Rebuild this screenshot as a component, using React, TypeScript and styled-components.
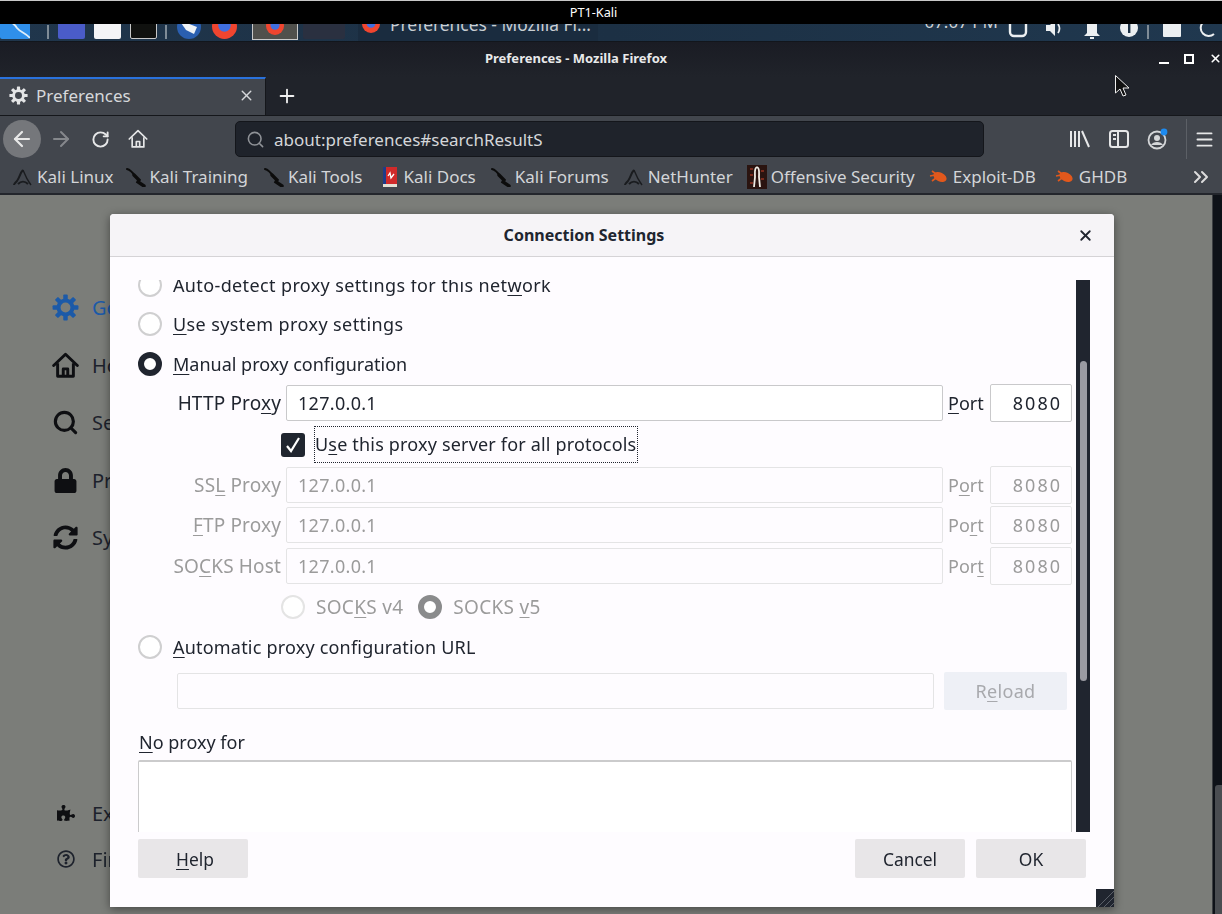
import styled, { createGlobalStyle } from 'styled-components';
import { ArrowLeft, ArrowRight, ChevronsRight, Menu, Plus, RotateCw, Search, X } from 'lucide-react';
import { FaLock, FaPuzzlePiece, FaRegQuestionCircle, FaSyncAlt } from 'react-icons/fa';

const GlobalStyle = createGlobalStyle`
  html, body {
    margin: 0;
    padding: 0;
    background: #000;
  }
  * {
    box-sizing: border-box;
  }
`;

const Screen = styled.div`
  position: relative;
  width: 1222px;
  height: 914px;
  overflow: hidden;
  display: flex;
  flex-direction: column;
  font-family: 'Noto Sans', sans-serif;
  filter: blur(0.35px);
`;

const HostBar = styled.div`
  height: 24px;
  flex: none;
  background: #000;
  border-top: 1px solid #c8c8c8;
  color: #fff;
  font-size: 12.7px;
  line-height: 23px;
  text-align: center;
  padding-right: 35px;
`;

const Panel = styled.div`
  height: 18px;
  flex: none;
  display: flex;
  align-items: flex-end;
  overflow: hidden;
  background: linear-gradient(90deg, #20364c, #1c3044 50%, #20384f);
  border-bottom: 1px solid #12161c;
  padding: 0 3px 2px 0;
`;

const PanelIcon = styled.div<{ $w: number; $h?: number; $bg?: string; $ml: number; $border?: string }>`
  flex: none;
  width: ${p => p.$w}px;
  height: ${p => p.$h ?? 22}px;
  margin-left: ${p => p.$ml}px;
  background: ${p => p.$bg ?? 'transparent'};
  border: ${p => p.$border ?? 'none'};
  border-radius: 2px;
`;

const PanelGlyph = styled.div<{ $ml: number }>`
  flex: none;
  display: flex;
  margin-left: ${p => p.$ml}px;
`;

const PanelSep = styled.div<{ $ml: number }>`
  flex: none;
  width: 2px;
  height: 14px;
  margin-left: ${p => p.$ml}px;
  background: #7f8c97;
`;

const ActiveLauncher = styled.div`
  flex: none;
  width: 46px;
  height: 30px;
  margin-left: 15px;
  margin-bottom: -1px;
  background: #50504c;
  border: 1px solid #c9c9c9;
  display: flex;
  align-items: flex-end;
  justify-content: center;
  padding-bottom: 4px;
`;

const TaskButton = styled.div`
  flex: none;
  width: 240px;
  height: 30px;
  margin-left: 13px;
  margin-bottom: -2px;
  padding: 0 6px 4px 4px;
  background: #1a2c3f;
  display: flex;
  align-items: center;
  gap: 10px;
  color: #c9ced2;
  font-size: 17.4px;
  white-space: nowrap;
`;

const Clock = styled.div`
  flex: none;
  margin-left: auto;
  margin-bottom: 5px;
  color: #cfd3d6;
  font-size: 17px;
  line-height: 24px;
`;

const TitleBar = styled.div`
  height: 35px;
  flex: none;
  display: flex;
  align-items: center;
  background: linear-gradient(180deg, #1a1c24, #20232a);
`;

const WindowTitle = styled.div`
  flex: 1;
  padding-bottom: 3px;
  text-align: center;
  color: #e8e9ea;
  font-size: 13px;
  font-weight: 700;
`;

const WindowControls = styled.div`
  width: 70px;
  display: flex;
  align-items: center;
  justify-content: space-between;
  padding: 0 0 2px 7px;
  color: #fff;
`;

const TabStrip = styled.div`
  height: 38px;
  flex: none;
  display: flex;
  align-items: stretch;
  background: #20232a;
`;

const Tab = styled.div`
  width: 266px;
  display: flex;
  align-items: center;
  gap: 8px;
  padding: 0 10px 3px 9px;
  background: #42464d;
  border-top: 2px solid #2a72dc;
  border-right: 1px solid #15171b;
  color: #d6d8db;
  font-size: 17px;
`;

const TabLabel = styled.span`
  flex: 1;
`;

const NewTab = styled.div`
  width: 42px;
  display: flex;
  align-items: center;
  justify-content: center;
  color: #f0f0f0;
`;

const NavBar = styled.div`
  height: 47px;
  flex: none;
  display: flex;
  align-items: center;
  background: #42464d;
  border-top: 1px solid #15171b;
`;

const BackButton = styled.div`
  width: 38px;
  height: 38px;
  margin-left: 3px;
  border-radius: 50%;
  background: #75777b;
  color: #e8e8e8;
  display: flex;
  align-items: center;
  justify-content: center;
`;

const NavIcon = styled.div<{ $w: number; $dim?: boolean }>`
  flex: none;
  width: ${p => p.$w}px;
  display: flex;
  align-items: center;
  justify-content: center;
  color: ${p => (p.$dim ? '#85888c' : '#e6e7e8')};
`;

const UrlBar = styled.div`
  width: 749px;
  height: 36px;
  margin: 0 76px 0 78px;
  padding-left: 10px;
  display: flex;
  align-items: center;
  gap: 9px;
  background: #1f232b;
  border: 1px solid #14161b;
  border-radius: 5px;
  color: #d4d6d9;
  font-size: 17px;
`;

const NavDivider = styled.div`
  width: 1px;
  height: 40px;
  margin: 0 5px 0 9px;
  background: #5c6066;
`;

const BookmarksBar = styled.div`
  height: 33px;
  flex: none;
  display: flex;
  align-items: center;
  gap: 14px;
  padding: 0 0 2px 13px;
  background: #42464d;
  border-bottom: 2px solid #23262c;
  color: #d3d5d8;
  font-size: 17px;
  white-space: nowrap;
`;

const Bookmark = styled.div<{ $nudge: number }>`
  flex: none;
  margin-left: ${p => p.$nudge}px;
  display: flex;
  align-items: center;
  gap: 4px;
`;

const MoreBookmarks = styled.div`
  margin-left: auto;
  margin-right: 9px;
  display: flex;
  color: #dcdcdc;
`;

const Body = styled.div`
  flex: 1;
  display: flex;
  min-height: 0;
`;

const PrefsPane = styled.div`
  flex: 1;
  display: flex;
  flex-direction: column;
  padding: 84px 0 32px 52px;
  background: #7b7d79;
`;

const PrefsItem = styled.div<{ $h: number; $active?: boolean }>`
  height: ${p => p.$h}px;
  display: flex;
  align-items: center;
  gap: 13px;
  color: ${p => (p.$active ? '#1c5aa8' : '#1d222c')};
  font-size: 20px;
`;

const PrefsIcon = styled.div`
  width: 27px;
  display: flex;
  justify-content: center;
`;

const PrefsFooter = styled.div`
  margin-top: auto;
`;

const OuterScroll = styled.div`
  flex: none;
  width: 10px;
  padding-top: 590px;
  background: #0e1218;
  border-left: 1px solid #3c3f42;
`;

const OuterThumb = styled.div`
  height: 100%;
  margin-left: 2px;
  border-radius: 3px 0 0 0;
  background: #4a4d51;
`;

const Dialog = styled.div`
  position: absolute;
  left: 110px;
  top: 214px;
  width: 1004px;
  height: 693px;
  display: flex;
  flex-direction: column;
  background: #fefcff;
  border-radius: 4px 4px 0 0;
  box-shadow: 0 2px 10px rgba(0, 0, 0, 0.45);
  color: #20252f;
  font-size: 18px;
`;

const DialogHeader = styled.div`
  height: 43px;
  flex: none;
  display: flex;
  align-items: center;
  justify-content: space-between;
  padding-right: 20px;
  background: #f6f4f7;
  border-bottom: 1px solid #d5d3d6;
  border-radius: 4px 4px 0 0;
  color: #20252f;
`;

const DialogTitle = styled.div`
  width: 948px;
  text-align: center;
  font-size: 16px;
  font-weight: 700;
`;

const ScrollArea = styled.div`
  height: 552px;
  flex: none;
  margin-top: 23px;
  display: flex;
  overflow: hidden;
  padding: 0 24px 0 28px;
`;

const ScrollContent = styled.div`
  flex: 1;
  min-width: 0;
  margin-top: -15px;
  margin-right: 4px;
`;

const Track = styled.div`
  flex: none;
  width: 14px;
  padding: 81px 3px 0 4px;
  background: #20252f;
`;

const Thumb = styled.div`
  height: 320px;
  border-radius: 4px;
  background: #9a9ba2;
`;

const RadioRow = styled.div<{ $h?: number; $mt?: number; $indent?: number; $disabled?: boolean }>`
  height: ${p => p.$h ?? 40}px;
  margin-top: ${p => p.$mt ?? 0}px;
  padding-left: ${p => p.$indent ?? 0}px;
  display: flex;
  align-items: center;
  white-space: nowrap;
  color: ${p => (p.$disabled ? '#9b9b9b' : 'inherit')};
`;

const RadioText = styled.span<{ $ls?: number }>`
  letter-spacing: ${p => p.$ls ?? 0}px;
`;

const SocksText = styled.span`
  font-size: 19px;
  letter-spacing: 0.3px;
`;

const Radio = styled.span<{ $checked?: boolean; $disabled?: boolean }>`
  flex: none;
  width: 24px;
  height: 24px;
  margin-right: 11px;
  border-radius: 50%;
  background: #fff;
  border: ${p => {
    if (p.$checked) return `6px solid ${p.$disabled ? '#8a8b8c' : '#20252f'}`;
    return `2px solid ${p.$disabled ? '#e4e4e4' : '#cfcfd0'}`;
  }};
`;

const SecondRadio = styled(Radio)`
  margin-left: 15px;
`;

const Key = styled.span`
  text-decoration: underline;
  text-underline-offset: 3px;
  text-decoration-thickness: 1px;
`;

const ProxyRow = styled.div<{ $mt: number; $disabled?: boolean }>`
  height: 38px;
  margin-top: ${p => p.$mt}px;
  display: flex;
  align-items: center;
  color: ${p => (p.$disabled ? '#9b9b9b' : 'inherit')};
`;

const FieldLabel = styled.label`
  flex: none;
  width: 143px;
  text-align: right;
  white-space: nowrap;
  font-size: 19px;
  letter-spacing: 0.15px;
`;

const PortLabel = styled.label`
  flex: none;
  width: 37px;
  margin: 0 5px;
`;

const TextField = styled.input`
  flex: 1;
  min-width: 0;
  height: 36px;
  margin-left: 5px;
  padding: 0 11px;
  background: #fff;
  border: 1px solid #c9c9cb;
  border-radius: 2px;
  outline: none;
  color: #20252f;
  font: inherit;
  letter-spacing: 0.3px;

  &:disabled {
    background: #fefcff;
    border-color: #e4e4e5;
    color: #9b9b9b;
  }
`;

const PortField = styled(TextField)`
  flex: none;
  width: 82px;
  height: 38px;
  margin-left: 0;
  padding-right: 9px;
  text-align: right;
  letter-spacing: 2px;
`;

const CheckRow = styled.div`
  height: 37px;
  margin-top: 4px;
  padding-left: 143px;
  display: flex;
  align-items: center;
`;

const CheckBox = styled.span`
  flex: none;
  width: 24px;
  height: 24px;
  margin-right: 9px;
  display: flex;
  align-items: center;
  justify-content: center;
  border-radius: 3px;
  background: #20252f;
  color: #fff;
`;

const FocusLabel = styled.span`
  height: 37px;
  padding: 0 1px 0 0;
  line-height: 35px;
  border: 1px dotted #20252f;
  white-space: nowrap;
  letter-spacing: 0.18px;
`;

const UrlRow = styled.div`
  margin-top: 5px;
  margin-right: 5px;
  padding-left: 39px;
  display: flex;
  align-items: center;
  height: 38px;
`;

const UrlField = styled(TextField)`
  margin-left: 0;
`;

const ReloadButton = styled.button`
  flex: none;
  width: 123px;
  height: 38px;
  margin-left: 10px;
  border: none;
  border-radius: 2px;
  background: #eef0f6;
  color: #a8a9ad;
  font: inherit;
  letter-spacing: 0.3px;
`;

const NoProxyLabel = styled.div`
  margin-top: 19px;
  padding-left: 1px;
  line-height: 26px;
`;

const NoProxyBox = styled.div`
  height: 120px;
  margin-top: 5px;
  background: #fff;
  border: 1px solid #cbcbcc;
  border-top-width: 2px;
  border-radius: 2px;
`;

const DialogFooter = styled.div`
  flex: 1;
  display: flex;
  align-items: flex-start;
  gap: 11px;
  padding: 7px 28px 0;
`;

const FooterButton = styled.button`
  width: 110px;
  height: 39px;
  border: none;
  border-radius: 2px;
  background: #e8e6e8;
  color: #20252f;
  font-family: inherit;
  font-size: 17.4px;
`;

const HelpButton = styled(FooterButton)`
  margin-right: auto;
  padding-left: 10px;
`;

const Resizer = styled.div`
  position: absolute;
  right: 0;
  bottom: 0;
  display: flex;
`;

const Pointer = styled.div`
  position: absolute;
  left: 1114px;
  top: 74px;
  display: flex;
`;

const Gear = ({ size, color }: { size: number; color: string }) => (
  <svg width={size} height={size} viewBox="0 0 24 24">
    <circle cx="12" cy="12" r="6.2" fill="none" stroke={color} strokeWidth="3.6" />
    {[0, 45, 90, 135, 180, 225, 270, 315].map(a => (
      <rect key={a} x="10" y="0.5" width="4" height="5" rx="0.8" fill={color} transform={`rotate(${a} 12 12)`} />
    ))}
  </svg>
);

const FirefoxMark = ({ size }: { size: number }) => (
  <svg width={size} height={size} viewBox="0 0 24 24">
    <circle cx="12" cy="12" r="12" fill="#f0452f" />
    <path d="M2 6 A12 12 0 0 1 22 6 L12 12 Z" fill="#ff9a24" />
    <circle cx="12" cy="11" r="6" fill="#3f6fe0" />
  </svg>
);

const KaliMark = () => (
  <svg width="30" height="22" viewBox="0 0 30 22">
    <rect width="30" height="22" rx="2" fill="#2f8fea" />
    <path d="M0 6 C8 2 14 6 17 11 C20 15 26 16 30 21" fill="none" stroke="#dfeefa" strokeWidth="1.8" />
  </svg>
);

const MailMark = () => (
  <svg width="24" height="24" viewBox="0 0 24 24">
    <circle cx="12" cy="12" r="12" fill="#2a5fb0" />
    <path d="M2 5 L20 12 L17 19 L9 15 Z" fill="#eef2f6" />
  </svg>
);

const TrayIcon = ({ kind }: { kind: 'net' | 'sound' | 'bell' | 'info' | 'box' | 'power' }) => (
  <svg width="20" height="22" viewBox="0 0 20 22" fill="none" stroke="#eceff1" strokeWidth="2.4">
    {kind === 'net' && <rect x="2" y="2" width="16" height="17" rx="4" />}
    {kind === 'sound' && (
      <>
        <path d="M2 8 H6 L11 3 V19 L6 14 H2 Z" fill="#eceff1" stroke="none" />
        <path d="M14 7 C16 10 16 13 14 16" strokeWidth="1.8" />
      </>
    )}
    {kind === 'bell' && (
      <>
        <path d="M5 16 V7 H15 V16 L18 19 H2 Z" fill="#eceff1" stroke="none" />
        <rect x="8" y="20" width="4" height="2" fill="#eceff1" stroke="none" />
      </>
    )}
    {kind === 'info' && (
      <>
        <circle cx="10" cy="11" r="9" fill="#eceff1" stroke="none" />
        <rect x="9" y="6" width="2.4" height="10" fill="#1c3044" stroke="none" />
      </>
    )}
    {kind === 'box' && <rect x="1" y="2" width="18" height="18" rx="1" fill="#eceff1" stroke="none" />}
    {kind === 'power' && <path d="M15 17 A8 8 0 1 1 15 5" strokeWidth="2" />}
  </svg>
);

const HomeIcon = ({ size, color, sw }: { size: number; color: string; sw: number }) => (
  <svg width={size} height={size} viewBox="0 0 24 24" fill="none" stroke={color} strokeWidth={sw} strokeLinejoin="round">
    <path d="M1.5 12 L12 2 L22.5 12" strokeLinecap="round" />
    <path d="M5 10 V21.5 H19 V10" />
    <path d="M10 21.5 V15 H14 V21.5" />
  </svg>
);

const Dragon = () => (
  <svg width="20" height="20" viewBox="0 0 20 20" fill="none" stroke="#0c0c0c" strokeLinecap="round">
    <path d="M1 2 C5 3 7 6 9 9" strokeWidth="2" />
    <path d="M8 8 L13 13 L12 15 L18 19" strokeWidth="3.4" />
  </svg>
);

const Hood = () => (
  <svg width="20" height="20" viewBox="0 0 20 20" fill="none" stroke="#1a1c1f">
    <path d="M10 3 C7 6 7 10 4 14 C2 16 1 17 1 18" strokeWidth="2" />
    <path d="M10 3 C12 7 13 11 16 15 L18 18" strokeWidth="1.4" />
    <path d="M5 17 C8 14 12 14 15 17" strokeWidth="2" />
  </svg>
);

const DocsBook = () => (
  <svg width="20" height="22" viewBox="0 0 20 22">
    <rect x="3" y="1" width="14" height="17" fill="#d02a2a" />
    <rect x="3" y="1" width="3" height="17" fill="#1f3c88" />
    <rect x="3" y="18" width="14" height="3" fill="#e4e0d4" />
    <path d="M8 10 L10 7 L11 12 L14 8" stroke="#fff" strokeWidth="1.3" fill="none" />
  </svg>
);

const OffsecMark = () => (
  <svg width="20" height="24" viewBox="0 0 20 24">
    <rect width="20" height="24" fill="#2a1410" />
    <path d="M3 4 H6 M3 10 H6 M14 6 H17 M14 14 H17 M3 18 H6" stroke="#7a2a1c" strokeWidth="2" />
    <path d="M10 2 C7 3 8 8 8 12 L7 22 M10 2 C13 3 12 8 12 12 L13 22" stroke="#f0ece4" strokeWidth="1.8" fill="none" />
  </svg>
);

const Bug = () => (
  <svg width="20" height="16" viewBox="0 0 20 16">
    <ellipse cx="11" cy="8" rx="7" ry="4.5" fill="#e2581c" transform="rotate(25 11 8)" />
    <path d="M1 7 L6 6 M3 2 L7 5 M3 12 L7 9" stroke="#e2581c" strokeWidth="1.6" />
  </svg>
);

const bookmarks = [
  { label: 'Kali Linux', icon: <Hood />, nudge: 0 },
  { label: 'Kali Training', icon: <Dragon />, nudge: -2 },
  { label: 'Kali Tools', icon: <Dragon />, nudge: 2 },
  { label: 'Kali Docs', icon: <DocsBook />, nudge: 3 },
  { label: 'Kali Forums', icon: <Dragon />, nudge: 1 },
  { label: 'NetHunter', icon: <Hood />, nudge: 1 },
  { label: 'Offensive Security', icon: <OffsecMark />, nudge: 0 },
  { label: 'Exploit-DB', icon: <Bug />, nudge: 0 },
  { label: 'GHDB', icon: <Bug />, nudge: 5 },
];

const App = () => {
  return (
    <>
      <GlobalStyle />
      <Screen>
        <HostBar>PT1-Kali</HostBar>
        <Panel>
          <KaliMark />
          <PanelSep $ml={17} />
          <PanelIcon $w={27} $bg="#4a5cc9" $ml={9} />
          <PanelIcon $w={27} $bg="#f4f4f6" $ml={9} />
          <PanelIcon $w={27} $bg="#10110f" $border="1px solid #c8c8c8" $ml={9} />
          <PanelSep $ml={8} />
          <PanelGlyph $ml={10}>
            <MailMark />
          </PanelGlyph>
          <PanelGlyph $ml={11}>
            <FirefoxMark size={25} />
          </PanelGlyph>
          <ActiveLauncher>
            <FirefoxMark size={18} />
          </ActiveLauncher>
          <PanelIcon $w={42} $bg="#2a3040" $ml={5} />
          <TaskButton>
            <FirefoxMark size={18} />
            Preferences - Mozilla Fi...
          </TaskButton>
          <Clock>07:07 PM</Clock>
          <PanelGlyph $ml={10}><TrayIcon kind="net" /></PanelGlyph>
          <PanelGlyph $ml={16}><TrayIcon kind="sound" /></PanelGlyph>
          <PanelGlyph $ml={18}><TrayIcon kind="bell" /></PanelGlyph>
          <PanelGlyph $ml={17}><TrayIcon kind="info" /></PanelGlyph>
          <PanelSep $ml={8} />
          <PanelGlyph $ml={13}><TrayIcon kind="box" /></PanelGlyph>
          <PanelGlyph $ml={17}><TrayIcon kind="power" /></PanelGlyph>
        </Panel>
        <TitleBar>
          <WindowTitle>Preferences - Mozilla Firefox</WindowTitle>
          <WindowControls>
            <svg width="10" height="10" viewBox="0 0 10 10"><rect y="8" width="10" height="2" fill="#fff" /></svg>
            <svg width="10" height="10" viewBox="0 0 10 10"><rect x="1" y="1" width="8" height="8" fill="none" stroke="#fff" strokeWidth="2" /></svg>
            <X size={13} strokeWidth={3} />
          </WindowControls>
        </TitleBar>
        <TabStrip>
          <Tab>
            <Gear size={19} color="#e4e5e6" />
            <TabLabel>Preferences</TabLabel>
            <X size={17} strokeWidth={2} />
          </Tab>
          <NewTab>
            <Plus size={22} strokeWidth={2} />
          </NewTab>
        </TabStrip>
        <NavBar>
          <BackButton>
            <ArrowLeft size={24} strokeWidth={2.2} />
          </BackButton>
          <NavIcon $w={40} $dim>
            <ArrowRight size={24} strokeWidth={2} />
          </NavIcon>
          <NavIcon $w={38}>
            <RotateCw size={19} strokeWidth={2.4} />
          </NavIcon>
          <NavIcon $w={38}>
            <HomeIcon size={20} color="#e6e7e8" sw={2} />
          </NavIcon>
          <UrlBar>
            <Search size={19} strokeWidth={2} color="#8f9297" />
            about:preferences#searchResultS
          </UrlBar>
          <NavIcon $w={39}>
            <svg width="22" height="20" viewBox="0 0 22 20" fill="none" stroke="#e6e7e8" strokeWidth="2">
              <path d="M2 2 V18 M6 2 V18 M10 2 V18 M13 2 L20 18" />
            </svg>
          </NavIcon>
          <NavIcon $w={39}>
            <svg width="20" height="20" viewBox="0 0 20 20" fill="none" stroke="#e6e7e8" strokeWidth="2">
              <rect x="1" y="2" width="18" height="16" rx="2.5" />
              <path d="M9 2 V18 M4 6 H7 M4 10 H7" />
            </svg>
          </NavIcon>
          <NavIcon $w={39}>
            <svg width="22" height="22" viewBox="0 0 22 22">
              <circle cx="10" cy="12" r="8.5" fill="none" stroke="#d4d6d8" strokeWidth="1.8" />
              <circle cx="10" cy="10" r="3" fill="#d4d6d8" />
              <path d="M4 17 C6 13 14 13 16 17" fill="#d4d6d8" />
              <circle cx="17" cy="4" r="3.4" fill="#1d8bf0" />
            </svg>
          </NavIcon>
          <NavDivider />
          <NavIcon $w={24}>
            <Menu size={21} strokeWidth={2.2} />
          </NavIcon>
        </NavBar>
        <BookmarksBar>
          {bookmarks.map(b => (
            <Bookmark key={b.label} $nudge={b.nudge}>
              {b.icon}
              {b.label}
            </Bookmark>
          ))}
          <MoreBookmarks>
            <ChevronsRight size={24} strokeWidth={2} />
          </MoreBookmarks>
        </BookmarksBar>
        <Body>
          <PrefsPane>
            <PrefsItem $h={57.5} $active>
              <PrefsIcon>
                <Gear size={27} color="#1c5aa8" />
              </PrefsIcon>
              General
            </PrefsItem>
            <PrefsItem $h={57.5}>
              <PrefsIcon>
                <HomeIcon size={29} color="#0e0f12" sw={2.6} />
              </PrefsIcon>
              Home
            </PrefsItem>
            <PrefsItem $h={57.5}>
              <PrefsIcon>
                <Search size={31} strokeWidth={2.8} color="#0e0f12" />
              </PrefsIcon>
              Search
            </PrefsItem>
            <PrefsItem $h={57.5}>
              <PrefsIcon>
                <FaLock size={25} color="#0e0f12" />
              </PrefsIcon>
              Privacy
            </PrefsItem>
            <PrefsItem $h={57.5}>
              <PrefsIcon>
                <FaSyncAlt size={25} color="#0e0f12" />
              </PrefsIcon>
              Sync
            </PrefsItem>
            <PrefsFooter>
              <PrefsItem $h={46}>
                <PrefsIcon>
                  <FaPuzzlePiece size={18} color="#0e0f12" />
                </PrefsIcon>
                Extensions
              </PrefsItem>
              <PrefsItem $h={46}>
                <PrefsIcon>
                  <FaRegQuestionCircle size={18} color="#1d222c" />
                </PrefsIcon>
                Firefox Support
              </PrefsItem>
            </PrefsFooter>
          </PrefsPane>
          <OuterScroll>
            <OuterThumb />
          </OuterScroll>
        </Body>

        <Dialog>
          <DialogHeader>
            <DialogTitle>Connection Settings</DialogTitle>
            <X size={17} strokeWidth={2.6} />
          </DialogHeader>
          <ScrollArea>
            <ScrollContent>
              <RadioRow $h={39}>
                <Radio />
                <RadioText $ls={0.37}>Auto-detect proxy settings for this net<Key>w</Key>ork</RadioText>
              </RadioRow>
              <RadioRow>
                <Radio />
                <RadioText $ls={0.4}><Key>U</Key>se system proxy settings</RadioText>
              </RadioRow>
              <RadioRow>
                <Radio $checked />
                <RadioText><Key>M</Key>anual proxy configuration</RadioText>
              </RadioRow>
              <ProxyRow $mt={0}>
                <FieldLabel>HTTP Pro<Key>x</Key>y</FieldLabel>
                <TextField readOnly value="127.0.0.1" />
                <PortLabel><Key>P</Key>ort</PortLabel>
                <PortField readOnly value="8080" />
              </ProxyRow>
              <CheckRow>
                <CheckBox>
                  <svg width="18" height="18" viewBox="0 0 18 18" fill="none" stroke="#fff" strokeWidth="2.2">
                    <path d="M3 10 L7 15 L15 2" />
                  </svg>
                </CheckBox>
                <FocusLabel>U<Key>s</Key>e this proxy server for all protocols</FocusLabel>
              </CheckRow>
              <ProxyRow $mt={3} $disabled>
                <FieldLabel>SS<Key>L</Key> Proxy</FieldLabel>
                <TextField disabled value="127.0.0.1" />
                <PortLabel>P<Key>o</Key>rt</PortLabel>
                <PortField disabled value="8080" />
              </ProxyRow>
              <ProxyRow $mt={2} $disabled>
                <FieldLabel><Key>F</Key>TP Proxy</FieldLabel>
                <TextField disabled value="127.0.0.1" />
                <PortLabel>Po<Key>r</Key>t</PortLabel>
                <PortField disabled value="8080" />
              </ProxyRow>
              <ProxyRow $mt={3} $disabled>
                <FieldLabel>SO<Key>C</Key>KS Host</FieldLabel>
                <TextField disabled value="127.0.0.1" />
                <PortLabel>Por<Key>t</Key></PortLabel>
                <PortField disabled value="8080" />
              </ProxyRow>
              <RadioRow $h={38} $mt={3} $indent={143} $disabled>
                <Radio $disabled />
                <SocksText>SOC<Key>K</Key>S v4</SocksText>
                <SecondRadio $checked $disabled />
                <SocksText>SOCKS <Key>v</Key>5</SocksText>
              </RadioRow>
              <RadioRow $mt={1}>
                <Radio />
                <RadioText $ls={0.2}><Key>A</Key>utomatic proxy configuration URL</RadioText>
              </RadioRow>
              <UrlRow>
                <UrlField disabled value="" />
                <ReloadButton disabled>R<Key>e</Key>load</ReloadButton>
              </UrlRow>
              <NoProxyLabel><Key>N</Key>o proxy for</NoProxyLabel>
              <NoProxyBox />
            </ScrollContent>
            <Track>
              <Thumb />
            </Track>
          </ScrollArea>
          <DialogFooter>
            <HelpButton><Key>H</Key>elp</HelpButton>
            <FooterButton>Cancel</FooterButton>
            <FooterButton>OK</FooterButton>
          </DialogFooter>
          <Resizer>
            <svg width="18" height="18" viewBox="0 0 18 18">
              <rect width="18" height="18" fill="#20252f" />
              <path d="M2 18 L18 2 M8 18 L18 8 M14 18 L18 14" stroke="#5a5f68" strokeWidth="1" />
            </svg>
          </Resizer>
        </Dialog>

        <Pointer>
          <svg width="18" height="24" viewBox="0 0 18 24">
            <path d="M1.5 1.5 V19 L6 15 L9 22 L12 21 L9 14 L15 14 Z" fill="#111" stroke="#eee" strokeWidth="1" />
          </svg>
        </Pointer>
      </Screen>
    </>
  );
};

export default App;
